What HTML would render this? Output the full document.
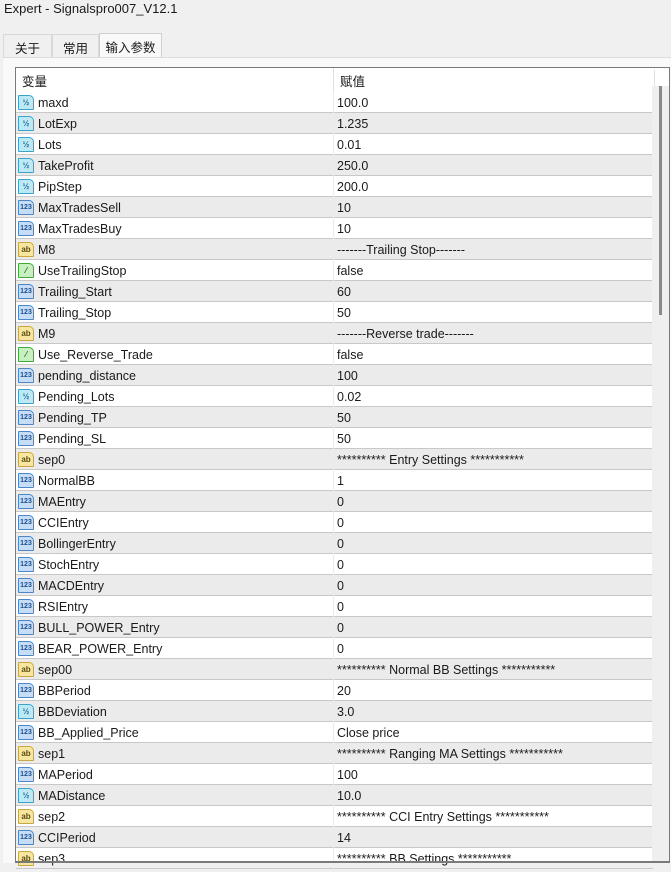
<!DOCTYPE html>
<html><head><meta charset="utf-8">
<style>
*{margin:0;padding:0;box-sizing:border-box}
body{width:671px;height:863px;overflow:hidden;background:#f0f0f0;font-family:"Liberation Sans","Noto Sans CJK SC",sans-serif;font-size:12.5px;color:#1a1a1a;position:relative}
.title{position:absolute;left:4px;top:1px;font-size:13px}
.tab{position:absolute;top:34px;height:24px;padding:3px 0 0;text-align:center;font-size:12.5px;border:1px solid #d9d9d9;border-bottom:none;background:#f0f0f0}
.panel{position:absolute;left:3px;top:57px;width:668px;height:806px;background:#f9f9f9;border-top:1px solid #dcdcdc}
.list{position:absolute;left:15px;top:67px;width:655px;height:796px;background:#fff;border:1px solid #7a7a7a;overflow:hidden}
.hdr{position:absolute;left:0;top:0;width:637px;height:24px;background:#fff}
.hdr span{position:absolute;top:3px}
.row{position:absolute;left:0;width:637px;height:21px;border-bottom:1px solid #c8c8c8}
.row.g{background:#ebebeb}
.row .n{position:absolute;left:22px;top:4px}
.row .v{position:absolute;left:321px;top:4px}
.ic{position:absolute;left:2px;top:3px;width:16px;height:15px;border:1px solid;border-radius:1px 5px 1px 1px;font-size:8px;line-height:13px;text-align:center;font-weight:bold;font-style:normal}
.d{background:#bfe8f5;border-color:#3aa3c9;color:#1a6e9a}
.i{background:#c7dcf5;border-color:#4a86c8;color:#1d4f8f;font-size:7px}
.s{background:#f6e6a0;border-color:#c9a640;color:#5e4a10}
.b{background:#c8efc0;border-color:#3fa83a;color:#1d6e1a}
</style></head><body>
<div class="title">Expert - Signalspro007_V12.1</div>
<div class="tab" style="left:3px;width:49px">关于</div>
<div class="tab" style="left:52px;width:47px">常用</div>
<div class="tab" style="left:99px;width:63px;top:33px;height:25px;background:#f9f9f9;border-color:#d0d0d0">输入参数</div>
<div class="panel"></div>
<div class="list">
<div class="hdr"><span style="left:6px">变量</span><span style="left:324px">赋值</span><div style="position:absolute;left:317px;top:0;width:1px;height:24px;background:#e0e0e0"></div><div style="position:absolute;left:638px;top:2px;width:1px;height:20px;background:#e0e0e0"></div></div>
</div>
<div style="position:absolute;left:16px;top:92px;width:637px">
<div class="row" style="top:0px"><i class="ic d">½</i><span class="n">maxd</span><span class="v">100.0</span></div>
<div class="row g" style="top:21px"><i class="ic d">½</i><span class="n">LotExp</span><span class="v">1.235</span></div>
<div class="row" style="top:42px"><i class="ic d">½</i><span class="n">Lots</span><span class="v">0.01</span></div>
<div class="row g" style="top:63px"><i class="ic d">½</i><span class="n">TakeProfit</span><span class="v">250.0</span></div>
<div class="row" style="top:84px"><i class="ic d">½</i><span class="n">PipStep</span><span class="v">200.0</span></div>
<div class="row g" style="top:105px"><i class="ic i">123</i><span class="n">MaxTradesSell</span><span class="v">10</span></div>
<div class="row" style="top:126px"><i class="ic i">123</i><span class="n">MaxTradesBuy</span><span class="v">10</span></div>
<div class="row g" style="top:147px"><i class="ic s">ab</i><span class="n">M8</span><span class="v">-------Trailing Stop-------</span></div>
<div class="row" style="top:168px"><i class="ic b">⁄</i><span class="n">UseTrailingStop</span><span class="v">false</span></div>
<div class="row g" style="top:189px"><i class="ic i">123</i><span class="n">Trailing_Start</span><span class="v">60</span></div>
<div class="row" style="top:210px"><i class="ic i">123</i><span class="n">Trailing_Stop</span><span class="v">50</span></div>
<div class="row g" style="top:231px"><i class="ic s">ab</i><span class="n">M9</span><span class="v">-------Reverse trade-------</span></div>
<div class="row" style="top:252px"><i class="ic b">⁄</i><span class="n">Use_Reverse_Trade</span><span class="v">false</span></div>
<div class="row g" style="top:273px"><i class="ic i">123</i><span class="n">pending_distance</span><span class="v">100</span></div>
<div class="row" style="top:294px"><i class="ic d">½</i><span class="n">Pending_Lots</span><span class="v">0.02</span></div>
<div class="row g" style="top:315px"><i class="ic i">123</i><span class="n">Pending_TP</span><span class="v">50</span></div>
<div class="row" style="top:336px"><i class="ic i">123</i><span class="n">Pending_SL</span><span class="v">50</span></div>
<div class="row g" style="top:357px"><i class="ic s">ab</i><span class="n">sep0</span><span class="v">********** Entry Settings ***********</span></div>
<div class="row" style="top:378px"><i class="ic i">123</i><span class="n">NormalBB</span><span class="v">1</span></div>
<div class="row g" style="top:399px"><i class="ic i">123</i><span class="n">MAEntry</span><span class="v">0</span></div>
<div class="row" style="top:420px"><i class="ic i">123</i><span class="n">CCIEntry</span><span class="v">0</span></div>
<div class="row g" style="top:441px"><i class="ic i">123</i><span class="n">BollingerEntry</span><span class="v">0</span></div>
<div class="row" style="top:462px"><i class="ic i">123</i><span class="n">StochEntry</span><span class="v">0</span></div>
<div class="row g" style="top:483px"><i class="ic i">123</i><span class="n">MACDEntry</span><span class="v">0</span></div>
<div class="row" style="top:504px"><i class="ic i">123</i><span class="n">RSIEntry</span><span class="v">0</span></div>
<div class="row g" style="top:525px"><i class="ic i">123</i><span class="n">BULL_POWER_Entry</span><span class="v">0</span></div>
<div class="row" style="top:546px"><i class="ic i">123</i><span class="n">BEAR_POWER_Entry</span><span class="v">0</span></div>
<div class="row g" style="top:567px"><i class="ic s">ab</i><span class="n">sep00</span><span class="v">********** Normal BB Settings ***********</span></div>
<div class="row" style="top:588px"><i class="ic i">123</i><span class="n">BBPeriod</span><span class="v">20</span></div>
<div class="row g" style="top:609px"><i class="ic d">½</i><span class="n">BBDeviation</span><span class="v">3.0</span></div>
<div class="row" style="top:630px"><i class="ic i">123</i><span class="n">BB_Applied_Price</span><span class="v">Close price</span></div>
<div class="row g" style="top:651px"><i class="ic s">ab</i><span class="n">sep1</span><span class="v">********** Ranging MA Settings ***********</span></div>
<div class="row" style="top:672px"><i class="ic i">123</i><span class="n">MAPeriod</span><span class="v">100</span></div>
<div class="row g" style="top:693px"><i class="ic d">½</i><span class="n">MADistance</span><span class="v">10.0</span></div>
<div class="row" style="top:714px"><i class="ic s">ab</i><span class="n">sep2</span><span class="v">********** CCI Entry Settings ***********</span></div>
<div class="row g" style="top:735px"><i class="ic i">123</i><span class="n">CCIPeriod</span><span class="v">14</span></div>
<div class="row" style="top:756px"><i class="ic s">ab</i><span class="n">sep3</span><span class="v">********** BB Settings ***********</span></div>
<div style="position:absolute;left:317px;top:0;width:1px;height:780px;background:#ececec"></div>
</div>
<div style="position:absolute;left:652px;top:86px;width:17px;height:775px;background:#efefef"></div>
<div style="position:absolute;left:659px;top:86px;width:3px;height:229px;background:#8a8a8a"></div>
<div style="position:absolute;left:15px;top:861px;width:655px;height:2px;background:#7a7a7a"></div>
</body></html>
